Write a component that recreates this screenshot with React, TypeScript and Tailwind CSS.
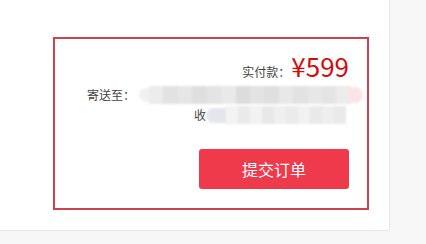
import React from 'react'

const font = { fontFamily: '"Microsoft YaHei", "Noto Sans CJK SC", sans-serif' }

const row1 = ['#ececec', '#e2e2e2', '#e6e6e6', '#dedede', '#e4e4e4', '#e9e9e9', '#dcdcdc', '#e3e3e3', '#dfdfdf', '#e8e8e8', '#e2e2e2', '#e7e7e7', '#e4e4e4', '#ececec']
const row2 = ['#f3f3f3', '#eaeaea', '#f2f2f2', '#e8e8e8', '#efefef', '#ebebeb', '#f1f1f1', '#e9e9e9', '#eeeeee', '#eaeaea']

function Mosaic({ cells, className }: { cells: string[]; className: string }) {
  return (
    <div className={`flex h-full blur-[1px] ${className}`}>
      {cells.map((c, i) => (
        <div key={i} className="flex-1 h-full" style={{ backgroundColor: c }} />
      ))}
    </div>
  )
}

export default function App() {
  return (
    <div className="w-[426px] h-[244px] bg-[#f7f7f7] overflow-hidden" style={font}>
      <div className="w-[390px] h-[231px] bg-white border-r border-b border-[#e8e8e8] pt-[37px] pl-[53px]">
        <div className="w-[316px] h-[173px] border-2 border-[#c9444f] flex flex-col items-end pr-[18px] pt-[14px]">
          {/* Price */}
          <div className="flex items-baseline h-[28px]">
            <span className="text-[12px] text-[#444]">实付款：</span>
            <span className="text-[26px] leading-none text-[#d40b0b] ml-[1px]">¥599</span>
          </div>

          {/* Address */}
          <div className="flex items-center h-[18px] mt-[5px] w-full pl-[32px]">
            <span className="text-[12px] text-[#444] w-[52px] shrink-0">寄送至：</span>
            <div className="relative h-[18px] w-[232px] -mr-[14px]">
              <div className="absolute left-0 top-[2px] w-[14px] h-[14px] rounded-l-full bg-[#f0f1f3] blur-[1px]" />
              <Mosaic cells={row1} className="ml-[10px] mr-[12px]" />
              <div className="absolute right-0 top-[1px] w-[16px] h-[16px] rounded-r-full bg-[#fbe4e8] blur-[1px]" />
            </div>
          </div>

          {/* Receiver */}
          <div className="flex items-center h-[18px] mt-[2px] mr-[3px]">
            <span className="text-[12px] text-[#444]">收</span>
            <div className="relative h-[18px] w-[140px]">
              <div className="absolute left-0 top-[2px] w-[30px] h-[15px] rounded-l-full bg-[#e3e6ea] blur-[1px]" />
              <Mosaic cells={row2} className="ml-[20px]" />
            </div>
          </div>

          {/* Submit */}
          <button className="mt-[25px] w-[150px] h-[40px] rounded-[3px] bg-[#ef3a4c] text-white text-[16px]">
            提交订单
          </button>
        </div>
      </div>
    </div>
  )
}
